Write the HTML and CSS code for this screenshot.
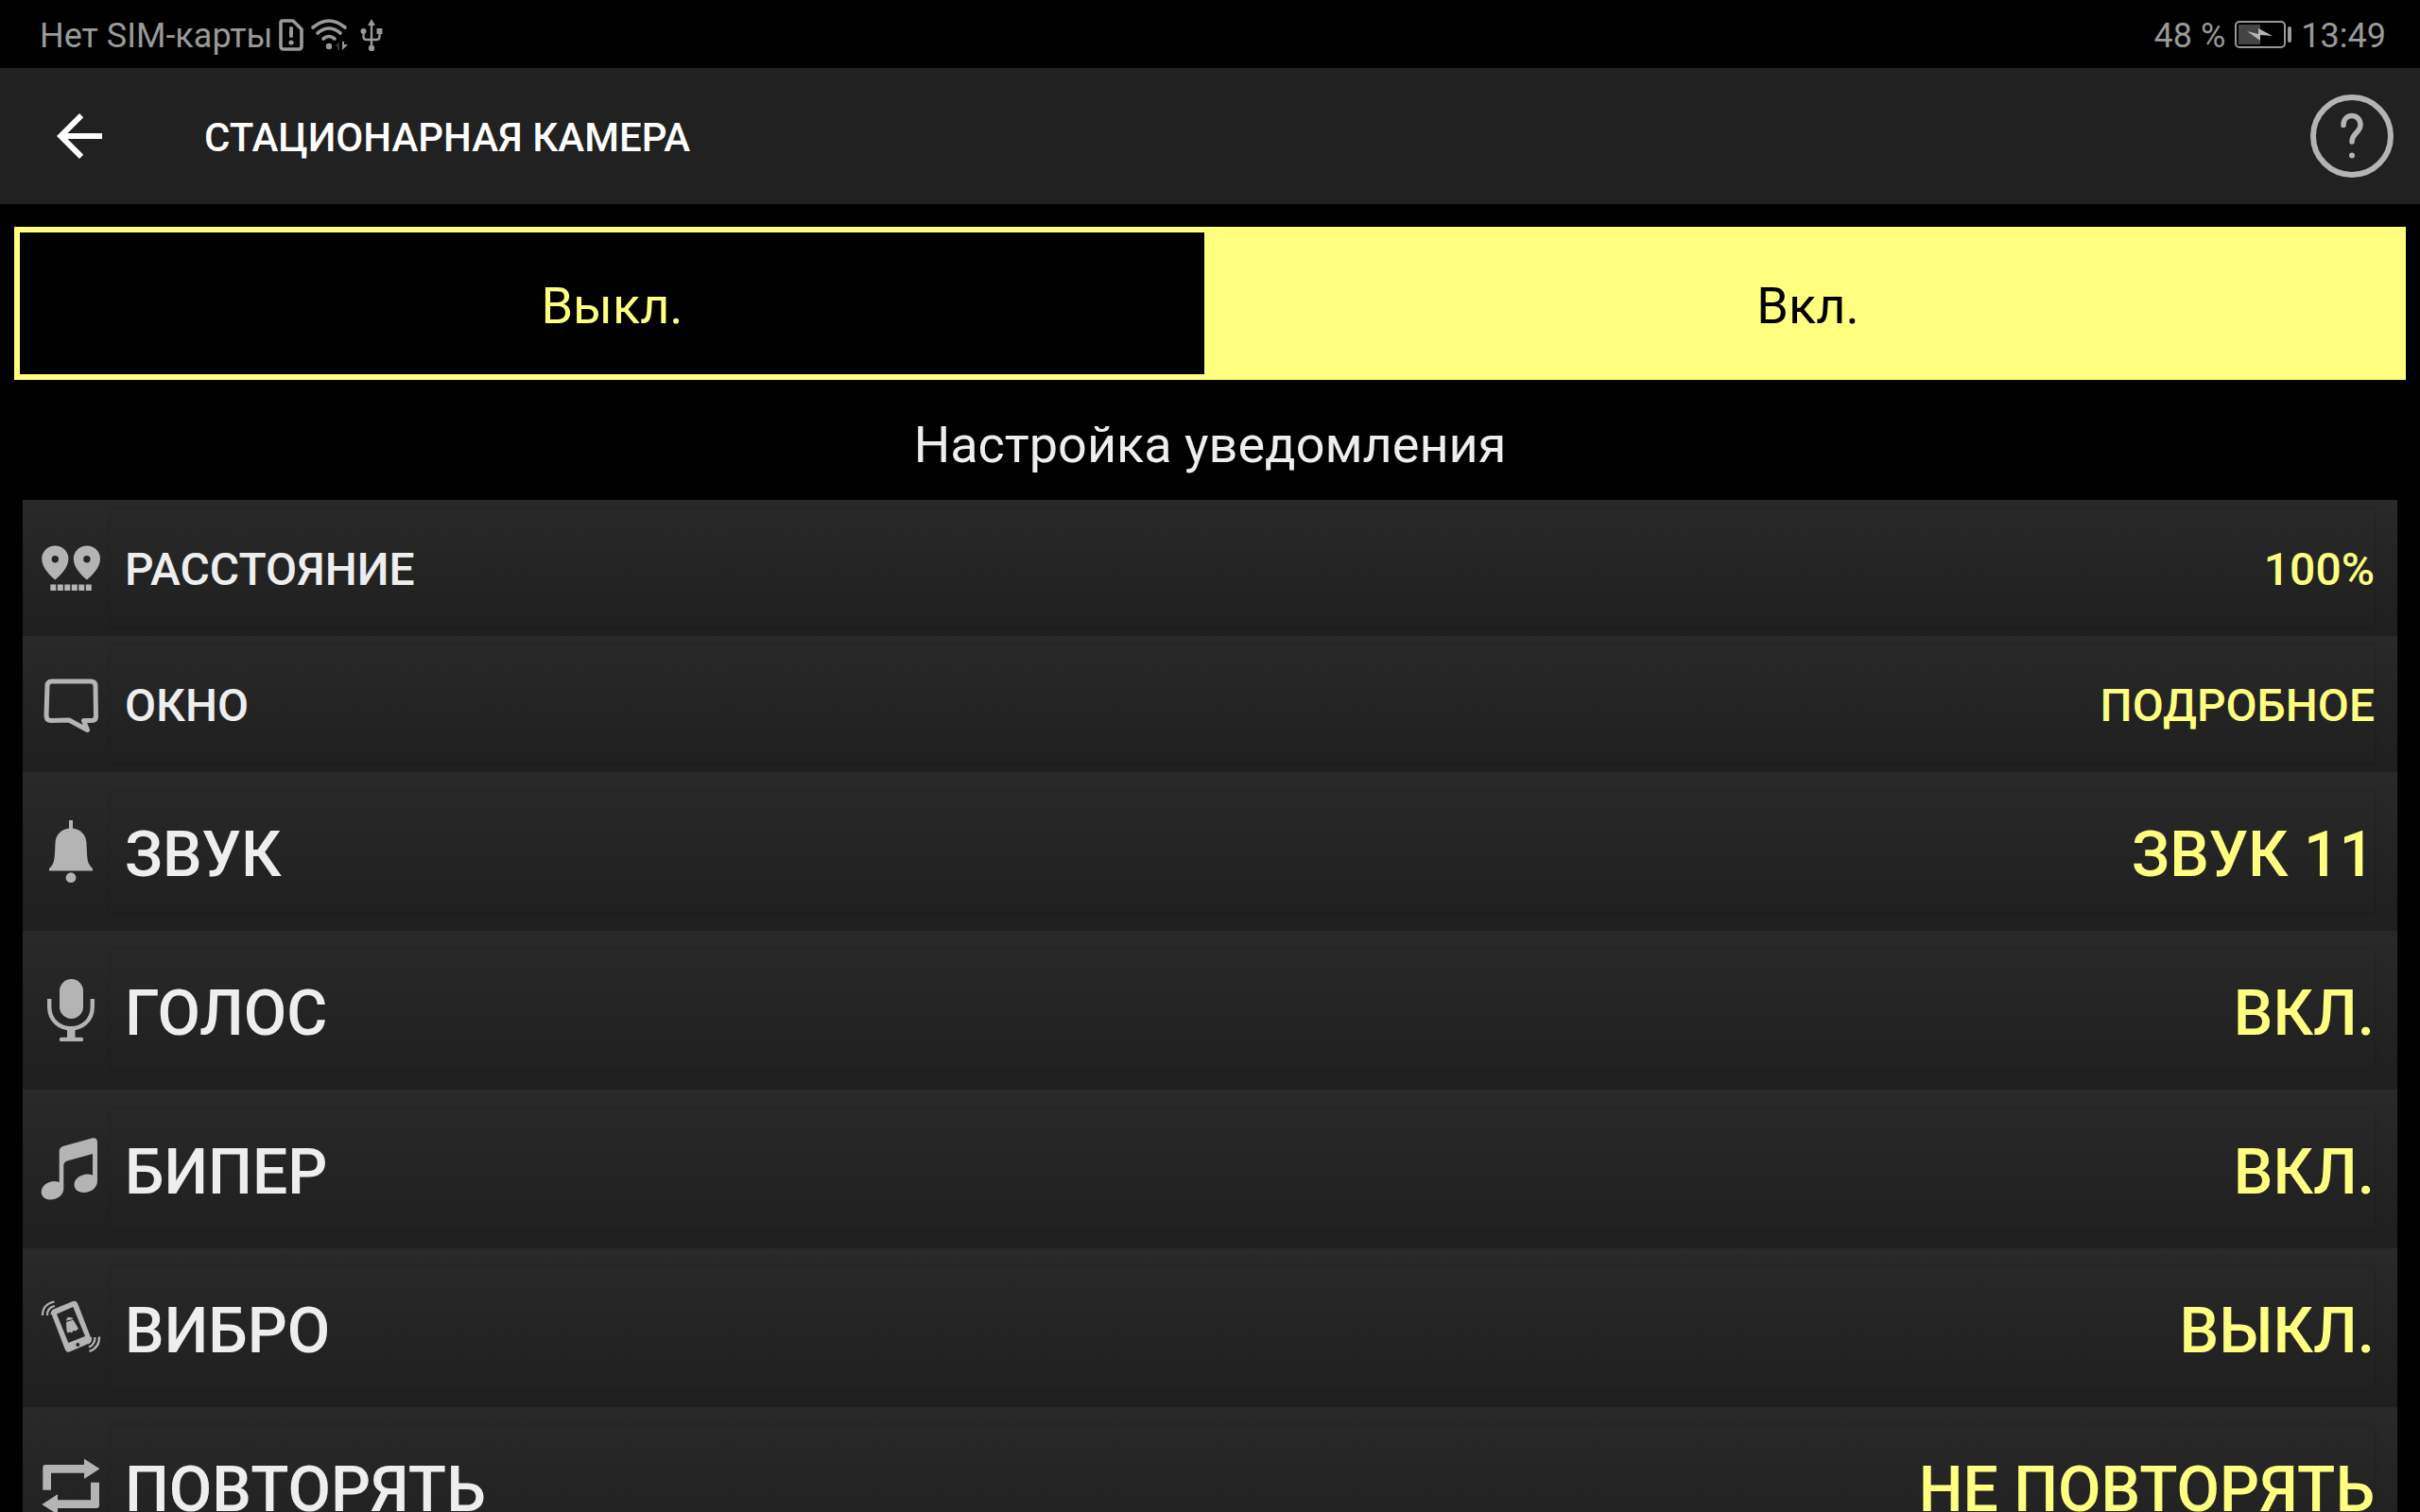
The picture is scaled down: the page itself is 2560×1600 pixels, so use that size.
FILE: index.html
```html
<!DOCTYPE html>
<html lang="ru">
<head>
    <meta charset="UTF-8">
    <meta name="viewport" content="width=device-width, initial-scale=1.0">
    <title>Стационарная камера</title>
    <link rel="stylesheet" href="styles.css">
</head>
<body>
    <div class="status-bar">
        <div class="status-left">
            <span>Нет SIM-карты</span>
            <svg class="sim" viewBox="0 0 26 34" width="26" height="34">
                <path d="M4 2H15L24 11V29Q24 32 21 32H5Q2 32 2 29V4Q2 2 4 2Z" fill="none" stroke="#999" stroke-width="3.6" stroke-linejoin="round"/>
                <path d="M13 10V18" stroke="#999" stroke-width="4" stroke-linecap="round"/>
                <circle cx="13" cy="25" r="2.6" fill="#999"/>
            </svg>
            <svg class="wifi" viewBox="0 0 40 34" width="40" height="34">
                <g fill="none" stroke="#999" stroke-width="3.6" stroke-linecap="round">
                    <path d="M3 9Q20 -5 37 9"/>
                    <path d="M8 15Q20 5 32 15"/>
                    <path d="M14 21Q20 16 26 21"/>
                </g>
                <circle cx="20" cy="29" r="3.2" fill="#999"/>
                <path d="M31 24L26 29H29V33H31Z" fill="#333"/>
                <path d="M34 24H36V27H40L34 33Z" fill="#999"/>
            </svg>
            <svg class="usb" viewBox="0 0 24 34" width="24" height="34">
                <path d="M12 5V28M3.500 13V19Q3.500 22 7 22H17Q20.500 22 20.500 19V13" fill="none" stroke="#999" stroke-width="2.400"/>
                <path d="M12 0L16 7H8Z" fill="#999"/>
                <circle cx="12" cy="31" r="3.200" fill="#999"/>
                <circle cx="3.500" cy="13" r="3" fill="#999"/>
                <rect x="17.500" y="10" width="6" height="6" fill="#999"/>
            </svg>
        </div>
        <div class="status-right">
            <span>48 %</span>
            <svg viewBox="0 0 60 30" width="60" height="30">
                <rect x="1" y="1" width="52" height="27" rx="4" fill="none" stroke="#999" stroke-width="2"/>
                <rect x="4" y="4" width="23" height="21" fill="#444"/>
                <path d="M13 11L25 14V8L40 16L27 15V21Z" fill="#b5b5b5"/>
                <rect x="56" y="6" width="4" height="17" rx="2" fill="#999"/>
            </svg>
            <span>13:49</span>
        </div>
    </div>

    <header class="header">
        <button class="icon-btn" aria-label="Назад">
            <svg viewBox="0 0 24 24" width="72" height="72">
                <path d="M20 11H7.830l5.590-5.590L12 4l-8 8 8 8 1.410-1.410L7.830 13H20v-2z" fill="#fff"/>
            </svg>
        </button>
        <h1 class="title">СТАЦИОНАРНАЯ КАМЕРА</h1>
        <button class="icon-btn" aria-label="Помощь">
            <svg viewBox="0 0 88 88" width="88" height="88">
                <g fill="none" stroke="#b4b4b4">
                    <circle cx="44" cy="44" r="41" stroke-width="6"/>
                    <path d="M35 32.500C35 19 53 19.500 53 32C53 40.500 44 40.500 44 50" stroke-width="5.500" stroke-linecap="round"/>
                </g>
                <circle cx="44" cy="64.500" r="3" fill="#b4b4b4"/>
            </svg>
        </button>
    </header>

    <main class="content">
        <div class="switch">
            <button class="switch-btn">Выкл.</button>
            <button class="switch-btn active">Вкл.</button>
        </div>

        <h2 class="subtitle">Настройка уведомления</h2>

        <div class="list">
            <button class="row">
                <svg class="icon" viewBox="0 0 66 66" width="66" height="66">
                    <path fill-rule="evenodd" d="M16.300 45.500C12 42 2.200 33 2.200 23.500A14.100 14.100 0 0 1 30.400 23.500C30.400 33 20.600 42 16.300 45.500ZM16.300 20A3.700 3.700 0 1 0 16.300 27.400A3.700 3.700 0 1 0 16.300 20Z"/>
                    <path fill-rule="evenodd" d="M49.900 45.500C45.600 42 35.800 33 35.800 23.500A14.100 14.100 0 0 1 64 23.500C64 33 54.200 42 49.900 45.500ZM49.900 20A3.700 3.700 0 1 0 49.900 27.400A3.700 3.700 0 1 0 49.900 20Z"/>
                    <path d="M11.300 50.500h6v6.500h-6zM18.800 50.500h6v6.500h-6zM26.300 50.500h6v6.500h-6zM33.800 50.500h6v6.500h-6zM41.300 50.500h6v6.500h-6zM48.800 50.500h6v6.500h-6z"/>
                </svg>
                <span class="row-text"><span>РАССТОЯНИЕ</span><span class="value">100%</span></span>
            </button>
            <button class="row">
                <svg class="icon" viewBox="0 0 66 66" width="66" height="66">
                    <path d="M13 9H54Q59 9 59 14L59.500 46Q59.500 50.500 55 50.500H46.500L50.500 60.500L31 50L12 50.500Q7 50.500 7 45L8 14Q8 9 13 9Z" fill="none" stroke="#b4b4b4" stroke-width="5" stroke-linejoin="round"/>
                </svg>
                <span class="row-text"><span>ОКНО</span><span class="value">ПОДРОБНОЕ</span></span>
            </button>
            <button class="row big">
                <svg class="icon" viewBox="0 0 66 66" width="66" height="66">
                    <path d="M31 0H35V8.500C44 9.500 49 16 49.500 24C50 34 50 42 52 46Q53.500 49 56 51V53.500H10V51Q12.500 49 14 46C16 42 16 34 16.500 24C17 16 22 9.500 31 8.500Z"/>
                    <circle cx="33" cy="60.700" r="5.400"/>
                </svg>
                <span class="row-text"><span>ЗВУК</span><span class="value">ЗВУК 11</span></span>
            </button>
            <button class="row big">
                <svg class="icon" viewBox="0 0 66 66" width="66" height="66">
                    <rect x="21" y="0" width="25" height="42" rx="12.500"/>
                    <path d="M10.200 21V29C10.200 60 55.800 60 55.800 29V21" fill="none" stroke="#b4b4b4" stroke-width="4.400"/>
                    <path d="M29 51H37.500V62H29Z"/>
                    <rect x="21" y="61.700" width="25" height="4.300" rx="1.500"/>
                </svg>
                <span class="row-text"><span>ГОЛОС</span><span class="value">ВКЛ.</span></span>
            </button>
            <button class="row big">
                <svg class="icon" viewBox="0 0 66 66" width="66" height="66">
                    <path d="M20.700 47V14Q20.700 10.500 24.500 9L56 0.300Q61 -0.500 61 5V46C61 53 54 58 47 58C40 58 36.500 54 36.500 49.500C36.500 42 47 36 56 39.500V17L29 24.500Q25.300 26 25.300 29V54C25.300 61 18 65.500 11 65.500C5 65.500 1.700 61.500 1.700 57.500C1.700 49.500 12 43.500 20.700 47Z"/>
                </svg>
                <span class="row-text"><span>БИПЕР</span><span class="value">ВКЛ.</span></span>
            </button>
            <button class="row big">
                <svg class="icon" viewBox="0 0 66 66" width="66" height="66">
                    <path fill-rule="evenodd" d="M14.500 13.500L35 5Q38.500 4 40 7L54.500 44.500Q55.500 48 52.500 49.500L31.500 58.500Q28.500 59.500 27 56.500L12.300 18Q11.500 15 14.500 13.500ZM18 18.500L30.300 49L48 42L35.300 11Z"/>
                    <circle cx="40.300" cy="51" r="2" fill="#242424"/>
                    <path d="M28 25.500Q29 21 32 22Q35 22 35.500 24ZM28 27L35.500 24.700L41 34L38 36.500L35.500 36L34 38.500L32 37.500L29.500 38.500L28.500 36Z"/>
                    <g fill="none" stroke="#b4b4b4" stroke-width="2.200">
                        <path d="M3 20Q3 8 15.500 5.500M8 20Q8 11.500 16 10M12.500 19Q12.500 15.500 17 14"/>
                        <path d="M63 42.500Q63.500 54 52.500 58M58.500 43Q58.500 51 52 53.500M54 43Q54.500 47 51 49.500"/>
                    </g>
                </svg>
                <span class="row-text"><span>ВИБРО</span><span class="value">ВЫКЛ.</span></span>
            </button>
            <button class="row big">
                <svg class="icon" viewBox="0 0 66 66" width="66" height="66">
                    <path d="M3.300 36.700V13Q3.300 10 6.300 10H47V3.700L63.500 14.300L47 25V18.700H12V36.700Z"/>
                    <path d="M63 28.700V53Q63 56 60 56H19V62.600L2.300 52L19 41.300V47.300H54V28.700Z"/>
                </svg>
                <span class="row-text"><span>ПОВТОРЯТЬ</span><span class="value">НЕ ПОВТОРЯТЬ</span></span>
            </button>
        </div>
    </main>
</body>
</html>
```

FILE: styles.css
```css
* {
    box-sizing: border-box;
}
body {
    margin: 0;
    height: 100vh;
    overflow: hidden;
    background: #000000;
    color: #eeeeee;
    font-family: Roboto, "Noto Sans", sans-serif;
}
button {
    border: none;
    margin: 0;
    font-family: inherit;
    color: inherit;
    cursor: pointer;
}
svg {
    display: block;
    flex-shrink: 0;
}

/* status bar */
.status-bar {
    display: flex;
    justify-content: space-between;
    height: 72px;
    padding: 2px 36px 0 42px;
    font-size: 36px;
    color: #999999;
}
.status-left,
.status-right {
    display: flex;
    align-items: center;
}
.status-left span,
.status-right span {
    padding-top: 2px;
}
.status-left {
    gap: 7px;
}
.status-right {
    gap: 10px;
}
.wifi {
    margin-right: 6px;
}

/* header */
.header {
    display: flex;
    align-items: center;
    height: 144px;
    padding: 0 28px 0 48px;
    background: #212121;
}
.icon-btn {
    padding: 0;
    background: none;
}
.title {
    flex: 1;
    margin: 0 0 0 96px;
    padding-top: 2px;
    font-size: 42px;
    font-weight: 500;
    color: #ffffff;
}

/* on / off switch */
.content {
    padding: 24px 15px 0;
}
.switch {
    display: flex;
}
.switch-btn {
    flex: 1;
    height: 162px;
    padding: 4px 0 0;
    border: 6px solid #ffff80;
    background: #000000;
    color: #ffff80;
    font-size: 54px;
}
.switch-btn.active {
    background: #ffff80;
    color: #000000;
}
.subtitle {
    margin: 0;
    padding-top: 10px;
    font-size: 54px;
    font-weight: 400;
    line-height: 117px;
    text-align: center;
}

/* settings */
.list {
    margin: 0 9px;
}
.row {
    display: flex;
    align-items: center;
    width: 100%;
    height: 144px;
    padding: 10px 24px 10px 18px;
    background: linear-gradient(#292929, #1f1f1f);
    font-size: 48px;
    font-weight: 500;
}
.row.big {
    height: 168px;
    padding: 20px 24px 20px 18px;
    font-size: 66px;
}
.icon {
    fill: #b4b4b4;
}
.row-text {
    display: flex;
    flex: 1;
    align-self: stretch;
    align-items: center;
    justify-content: space-between;
    margin-left: 9px;
    padding: 2px 0 0 15px;
    box-shadow: 0 0 4px rgba(0, 0, 0, 0.2);
}
.big .row-text {
    padding-top: 7px;
}
.value {
    color: #ffff80;
}
```
